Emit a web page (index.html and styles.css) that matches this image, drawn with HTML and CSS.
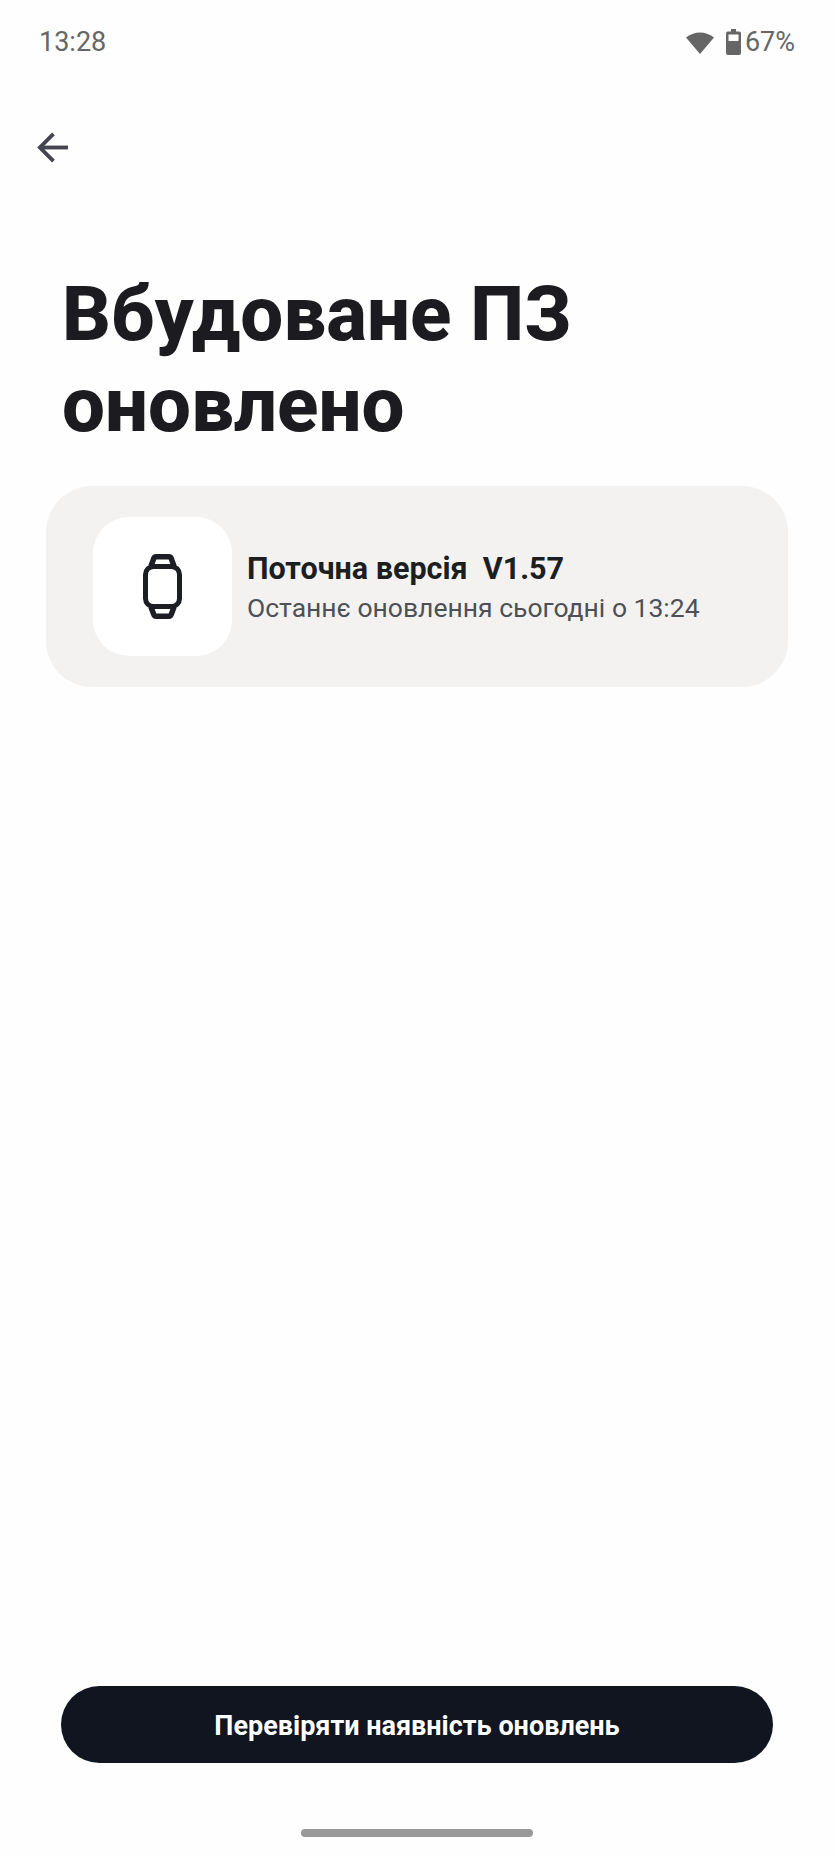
FILE: index.html
```html
<!DOCTYPE html>
<html lang="uk">

<head>
  <meta charset="UTF-8" />
  <meta name="viewport" content="width=device-width, initial-scale=1.0" />
  <title>Вбудоване ПЗ оновлено</title>
  <link rel="stylesheet" href="styles.css">
</head>

<body>

  <div class="status-bar">
    <span class="status-time">13:28</span>
    <div class="status-icons">
      <svg class="wifi-icon" viewBox="0 0 28 24" xmlns="http://www.w3.org/2000/svg">
        <path d="M0 7.5 Q14 -2.5 28 7.5 L14 24 Z" fill="#666" />
      </svg>
      <svg class="battery-icon" viewBox="0 0 15 26" xmlns="http://www.w3.org/2000/svg">
        <path d="M5 0 H10 V2.5 H13 Q15 2.5 15 4.5 V24 Q15 26 13 26 H2 Q0 26 0 24 V4.5 Q0 2.5 2 2.5 H5 Z M2.5 5.5 V12 H12.500 V5.5 Z"
          fill="#666" fill-rule="evenodd" />
      </svg>
      <span class="status-battery">67%</span>
    </div>
  </div>

  <div class="top-nav">
    <svg class="back-icon" viewBox="0 0 32 32" xmlns="http://www.w3.org/2000/svg" fill="none" stroke="#45454f"
      stroke-width="4">
      <path d="M32 16 H3" />
      <path d="M17 2 L3 16 L17 30" />
    </svg>
  </div>

  <h1 class="page-title">Вбудоване ПЗ<br>оновлено</h1>

  <div class="version-card">
    <div class="device-tile">
      <svg class="watch-icon" viewBox="0 0 39 65" xmlns="http://www.w3.org/2000/svg" fill="none" stroke="#1c1e23"
        stroke-width="5">
        <rect x="2.500" y="12.500" width="34" height="40" rx="8" />
        <path d="M8 12 L10.800 4.500 Q11.300 2.800 13 2.800 H26 Q27.700 2.800 28.200 4.500 L31 12" stroke-width="5.500" />
        <path d="M8 53 L10.800 60.500 Q11.300 62.200 13 62.200 H26 Q27.700 62.200 28.200 60.500 L31 53" stroke-width="5.500" />
      </svg>
    </div>
    <div class="version-text">
      <div class="version-name">Поточна версія&nbsp; V1.57</div>
      <div class="version-date">Останнє оновлення сьогодні о 13:24</div>
    </div>
  </div>

  <div class="spacer"></div>

  <button class="check-button" type="button">Перевіряти наявність оновлень</button>

  <div class="home-bar"></div>

</body>

</html>
```

FILE: styles.css
```css
body {
  font-family: Roboto, "Liberation Sans", sans-serif;
  background: #fefefe;
  color: #1c1c20;
  margin: 0;
  padding: 0;
  display: flex;
  flex-direction: column;
  height: 1856px;
  overflow: hidden;
}

.status-bar {
  display: flex;
  justify-content: space-between;
  align-items: center;
  height: 26px;
  padding: 29px 40px 0 39px;
  color: #666;
  font-size: 27px;
}

.status-icons {
  display: flex;
  align-items: center;
}

.wifi-icon {
  width: 28px;
  height: 24px;
  margin-right: 12px;
}

.battery-icon {
  width: 15px;
  height: 26px;
  margin-right: 4px;
}

.top-nav {
  height: 30px;
  padding: 77px 0 0 37px;
}

.back-icon {
  display: block;
  width: 31px;
  height: 31px;
}

.page-title {
  font-family: Roboto, sans-serif;
  font-size: 76.300px;
  font-weight: 800;
  line-height: 91px;
  margin: 107px 0 0 62px;
  color: #1c1c20;
}

.version-card {
  display: flex;
  align-items: center;
  gap: 15px;
  height: 201px;
  margin: 35px 47px 0 46px;
  padding-left: 47px;
  background: #f3f2f1;
  border-radius: 46px;
}

.device-tile {
  display: flex;
  justify-content: center;
  align-items: center;
  width: 139px;
  height: 139px;
  background: #ffffff;
  border-radius: 36px;
}

.watch-icon {
  width: 39px;
  height: 65px;
}

.version-text {
  padding-top: 3px;
}

.version-name {
  font-size: 30.500px;
  font-weight: 700;
  line-height: 39px;
  color: #1c1e22;
}

.version-date {
  font-size: 26.500px;
  line-height: 39px;
  color: #4d5056;
}

.spacer {
  flex: 1;
}

.check-button {
  display: block;
  width: 712px;
  height: 77px;
  margin: 0 0 0 61px;
  padding-top: 3px;
  background-color: #10151f;
  color: #ffffff;
  border: none;
  border-radius: 39px;
  font-family: Roboto, sans-serif;
  font-size: 27px;
  font-weight: 700;
}

.home-bar {
  width: 232px;
  height: 8px;
  margin: 66px 0 19px 301px;
  background: #999;
  border-radius: 4px;
}
```
